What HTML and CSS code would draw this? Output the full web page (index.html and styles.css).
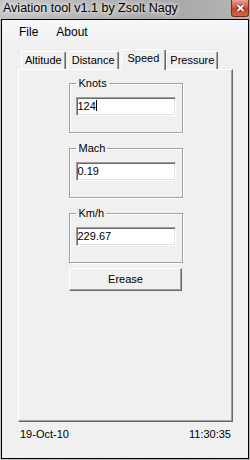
FILE: index.html
```html
<!DOCTYPE html>
<html lang="en">

<head>
    <meta charset="UTF-8">
    <title>Aviation tool v1.1 by Zsolt Nagy</title>
    <link rel="stylesheet" href="styles.css">
</head>

<body>
    <div class="window">
        <div class="titlebar">
            <span class="title">Aviation tool v1.1 by Zsolt Nagy</span>
            <div class="close-btn">
                <svg width="9" height="8" viewBox="0 0 9 8">
                    <path d="M1.5 1 L7.5 7 M7.5 1 L1.5 7" stroke="#5a1a10" stroke-width="3.2" />
                    <path d="M1.5 1 L7.5 7 M7.5 1 L1.5 7" stroke="#fff" stroke-width="1.8" />
                </svg>
            </div>
        </div>

        <div class="client">
            <div class="menubar">
                <span class="menu-item">File</span>
                <span class="menu-item">About</span>
            </div>

            <div class="tabcontrol">
                <div class="tabstrip">
                    <div class="tab">Altitude</div>
                    <div class="tab">Distance</div>
                    <div class="tab active">Speed</div>
                    <div class="tab">Pressure</div>
                </div>
                <div class="tabpage">
                    <fieldset class="group">
                        <legend>Knots</legend>
                        <div class="textbox">124<span class="caret"></span></div>
                    </fieldset>
                    <fieldset class="group">
                        <legend>Mach</legend>
                        <div class="textbox">0.19</div>
                    </fieldset>
                    <fieldset class="group">
                        <legend>Km/h</legend>
                        <div class="textbox">229.67</div>
                    </fieldset>
                    <button class="btn">Erease</button>
                </div>
            </div>

            <div class="statusbar">
                <span>19-Oct-10</span>
                <span>11:30:35</span>
            </div>
        </div>
    </div>
</body>

</html>
```

FILE: styles.css
```css
body {
    margin: 0;
    font-family: "Liberation Sans", Arial, sans-serif;
    font-size: 11px;
    color: #000;
}

.window {
    width: 250px;
    height: 460px;
    box-sizing: border-box;
    padding: 0 1px 1px;
    display: flex;
    flex-direction: column;
    background: linear-gradient(90deg, #c4c4c4, #b0b0b0 45%, #a8a8a8 70%, #b6b6b6);
    /* 模糊玻璃邊框 */
}

.titlebar {
    height: 19px;
    display: flex;
    justify-content: space-between;
    align-items: flex-start;
    padding-left: 2px;
}

.title {
    font-size: 12.5px;
    line-height: 17px;
    text-shadow: 0 0 4px #fff, 0 0 6px #eee;
    white-space: nowrap;
}

.close-btn {
    width: 18px;
    height: 17px;
    box-sizing: border-box;
    border: 1px solid #7b2c20;
    border-top: none;
    border-radius: 0 0 3px 3px;
    background: linear-gradient(#e6a394, #d05a44 45%, #c2402b 55%, #d3664c);
    display: flex;
    align-items: center;
    justify-content: center;
}

.client {
    flex: 1;
    display: flex;
    flex-direction: column;
    border: 1px solid #000;
    background: #f0f0f0;
}

.menubar {
    height: 20px;
    box-sizing: border-box;
    padding: 5px 0 0 8px;
    display: flex;
    background: linear-gradient(#f7f8fa, #f0f1f3);
}

.menu-item {
    font-size: 12px;
    line-height: 15px;
    padding: 0 9px;
}

.tabcontrol {
    padding: 9px 15px 0 16px;
}

.tabstrip {
    height: 20px;
    display: flex;
    align-items: flex-end;
    gap: 2px;
    padding-left: 3px;
}

.tab {
    position: relative;
    height: 18px;
    box-sizing: border-box;
    padding: 0 3px;
    line-height: 16px;
    border-top: 1px solid #fff;
    border-left: 1px solid #fff;
    border-right: 1px solid #696969;
    border-radius: 2px 2px 0 0;
    box-shadow: inset -1px 0 #a0a0a0;
    background: #f0f0f0;
    white-space: nowrap;
}

.tab.active {
    height: 21px;
    margin-bottom: -1px;
    margin-right: -2px;
    padding: 0 6px;
    z-index: 1;
}

.tabpage {
    height: 353px;
    box-sizing: border-box;
    padding-top: 7px;
    display: flex;
    flex-direction: column;
    align-items: center;
    border-top: 1px solid #fff;
    border-left: 1px solid #fff;
    border-right: 1px solid #696969;
    border-bottom: 1px solid #696969;
    box-shadow: inset -1px -1px #a0a0a0;
}

.group {
    width: 113px;
    box-sizing: border-box;
    margin: 0 0 9px;
    padding: 7px 6px 16px;
    border: 1px solid #a0a0a0;
    box-shadow: inset 1px 1px #fff, 1px 1px #fff;
}

.group legend {
    padding: 0 2px 0 3px;
    line-height: 13px;
}

.textbox {
    width: 100px;
    height: 19px;
    box-sizing: border-box;
    padding-left: 1px;
    line-height: 13px;
    background: #fff;
    border-top: 1px solid #a0a0a0;
    border-left: 1px solid #a0a0a0;
    border-right: 1px solid #fff;
    border-bottom: 1px solid #fff;
    box-shadow: inset 1px 1px #696969, inset -1px -1px #e3e3e3;
    padding-top: 2px;
}

.caret {
    display: inline-block;
    width: 1px;
    height: 11px;
    background: #000;
    vertical-align: -1px;
}

.btn {
    width: 113px;
    height: 23px;
    margin-top: -4px;
    font-family: inherit;
    font-size: 11px;
    line-height: 13px;
    color: #000;
    background: #f0f0f0;
    border-top: 1px solid #fff;
    border-left: 1px solid #fff;
    border-right: 1px solid #696969;
    border-bottom: 1px solid #696969;
    box-shadow: inset -1px -1px #a0a0a0;
    padding: 0;
}

.statusbar {
    display: flex;
    justify-content: space-between;
    margin-top: 6px;
    padding: 0 17px 0 18px;
    line-height: 13px;
}
```
